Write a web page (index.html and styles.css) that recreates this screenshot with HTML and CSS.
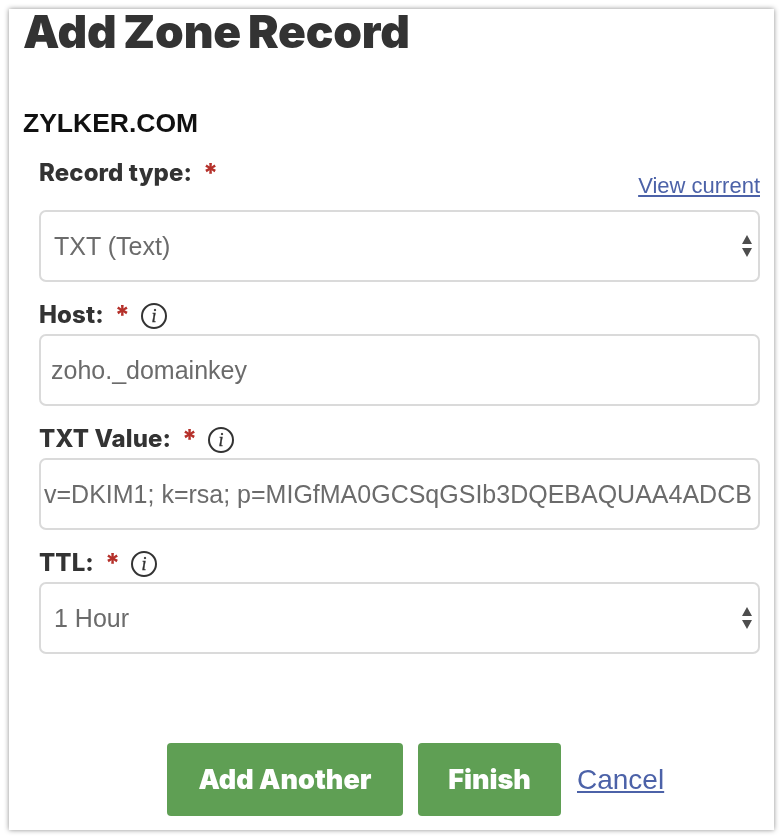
FILE: index.html
```html
<!DOCTYPE html>
<html lang="en">
<head>
    <meta charset="UTF-8">
    <meta name="viewport" content="width=device-width, initial-scale=1.0">
    <title>Add Zone Record</title>
    <link rel="stylesheet" href="styles.css">
</head>
<body>
    <div class="card">
        <h1>Add Zone Record</h1>
        <h2>ZYLKER.COM</h2>
        <form class="record-form">
            <div class="field field-type">
                <div class="label-row">
                    <label class="label" for="type">Record type:</label>
                    <span class="required">*</span>
                    <a class="view-current" href="#">View current</a>
                </div>
                <div class="select-wrap">
                    <select id="type" class="control">
                        <option>TXT (Text)</option>
                    </select>
                    <svg class="arrows" width="12" height="24" viewBox="0 0 12 24"><path d="M6 1l5 9H1zM6 23l-5-9h10z"/></svg>
                </div>
            </div>
            <div class="field">
                <div class="label-row">
                    <label class="label" for="host">Host:</label>
                    <span class="required">*</span>
                    <svg class="info" width="26" height="26" viewBox="0 0 26 26"><circle cx="13" cy="13" r="12"/><text x="13" y="19" text-anchor="middle">i</text></svg>
                </div>
                <input id="host" class="control input-host" type="text" value="zoho._domainkey">
            </div>
            <div class="field">
                <div class="label-row">
                    <label class="label" for="txt">TXT Value:</label>
                    <span class="required">*</span>
                    <svg class="info" width="26" height="26" viewBox="0 0 26 26"><circle cx="13" cy="13" r="12"/><text x="13" y="19" text-anchor="middle">i</text></svg>
                </div>
                <input id="txt" class="control input-txt" type="text" value="v=DKIM1; k=rsa; p=MIGfMA0GCSqGSIb3DQEBAQUAA4ADCB">
            </div>
            <div class="field">
                <div class="label-row">
                    <label class="label" for="ttl">TTL:</label>
                    <span class="required">*</span>
                    <svg class="info" width="26" height="26" viewBox="0 0 26 26"><circle cx="13" cy="13" r="12"/><text x="13" y="19" text-anchor="middle">i</text></svg>
                </div>
                <div class="select-wrap">
                    <select id="ttl" class="control">
                        <option>1 Hour</option>
                    </select>
                    <svg class="arrows" width="12" height="24" viewBox="0 0 12 24"><path d="M6 1l5 9H1zM6 23l-5-9h10z"/></svg>
                </div>
            </div>
            <div class="actions">
                <button class="btn btn-add" type="button">Add Another</button>
                <button class="btn btn-finish" type="button">Finish</button>
                <a class="cancel" href="#">Cancel</a>
            </div>
        </form>
    </div>
</body>
</html>
```
FILE: styles.css
```css
html, body {
    height: 100%;
}

body {
    margin: 0;
    padding: 9px;
    box-sizing: border-box;
    background: #fff;
    overflow: hidden;
    font-family: 'Liberation Sans', Arial, sans-serif;
}

.card {
    height: 821px;
    width: 765px;
    box-sizing: border-box;
    padding: 0 14px 0 14px;
    background: #fff;
    box-shadow: 0 0 5px rgba(0, 0, 0, 0.45);
    filter: blur(0.6px);
}

h1 {
    margin: 0;
    font-family: Inter, sans-serif;
    font-size: 46px;
    font-weight: 900;
    line-height: 44px;
    letter-spacing: -0.2px;
    word-spacing: -2px;
    color: #333;
}

h2 {
    margin: 56px 0 0;
    font-size: 26.5px;
    font-weight: 700;
    line-height: 28px;
    color: #111;
}

.record-form {
    margin-left: 16px;
}

.field {
    margin-top: 12px;
}

.field-type {
    margin-top: 15px;
}

.field-type .label-row {
    margin-bottom: 18px;
}

.label-row {
    display: flex;
    align-items: center;
    height: 40px;
    position: relative;
}

.label {
    font-family: Inter, sans-serif;
    font-size: 24px;
    font-weight: 800;
    letter-spacing: 0.1px;
    color: #333;
}

.required {
    margin-left: 11px;
    font-family: Inter, sans-serif;
    font-size: 26px;
    font-weight: 800;
    color: #b5302a;
}

.info {
    margin-left: 11px;
    margin-top: 3px;
}

.info circle {
    fill: none;
    stroke: #333;
    stroke-width: 2;
}

.info text {
    font-family: 'Liberation Serif', serif;
    font-style: italic;
    font-size: 18px;
    fill: #333;
    stroke: #333;
    stroke-width: 0.4;
}

.view-current {
    position: absolute;
    right: 0;
    top: 21px;
    font-size: 22px;
    color: #4c62a8;
}

.control {
    display: block;
    width: 100%;
    height: 72px;
    box-sizing: border-box;
    margin: 0;
    padding: 0 0 0 13px;
    background: #fff;
    border: 2px solid #dadada;
    border-radius: 7px;
    font-family: 'Liberation Sans', Arial, sans-serif;
    font-size: 25px;
    color: #6b6b6b;
    appearance: none;
}

.input-host {
    padding-left: 10px;
}

.input-txt {
    padding-left: 3px;
}

.select-wrap {
    position: relative;
}

.arrows {
    position: absolute;
    right: 7px;
    top: 24px;
    fill: #4d4d4d;
}

.actions {
    display: flex;
    align-items: center;
    margin-top: 89px;
    margin-left: 128px;
}

.btn {
    height: 73px;
    border: none;
    border-radius: 4px;
    background: #5f9f54;
    color: #fff;
    font-family: Inter, sans-serif;
    font-size: 27px;
    font-weight: 900;
    letter-spacing: 0;
}

.btn-add {
    width: 236px;
}

.btn-finish {
    width: 143px;
    margin-left: 15px;
}

.cancel {
    margin-left: 16px;
    font-size: 28px;
    color: #4c62a8;
}
```
